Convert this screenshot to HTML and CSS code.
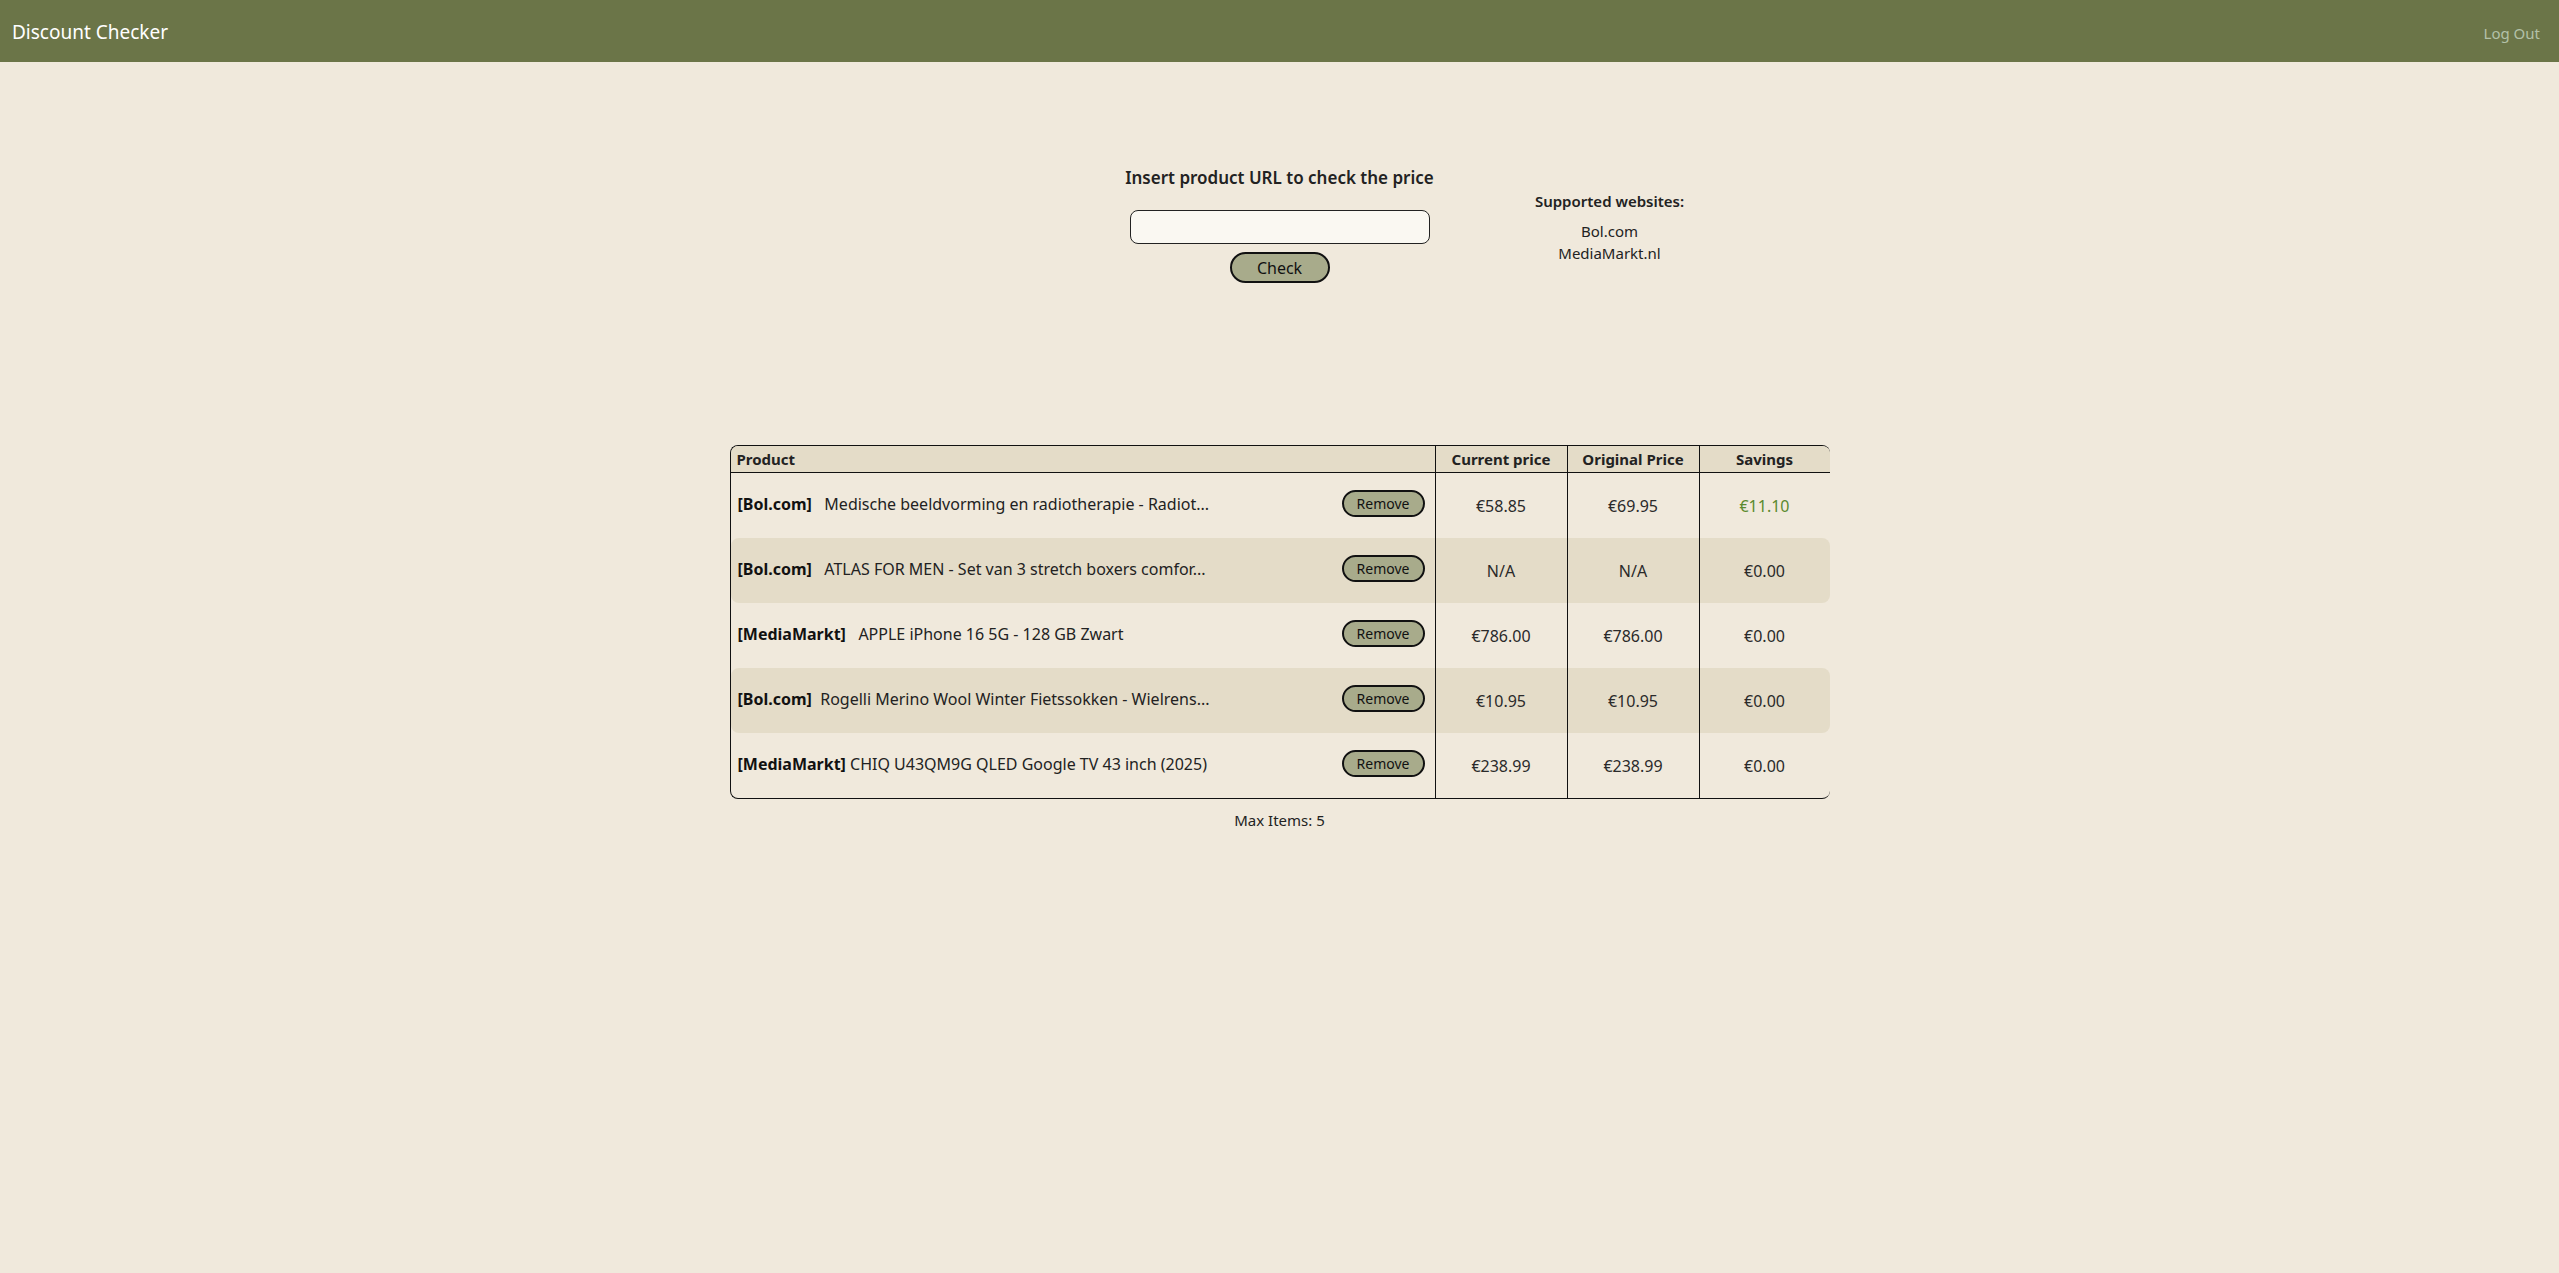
FILE: index.html
```html
<!DOCTYPE html>
<html lang="en">
<head>
<meta charset="utf-8">
<title>Discount Checker</title>
<link rel="stylesheet" href="styles.css">
</head>
<body>
<header class="topbar">
  <span class="brand">Discount Checker</span>
  <a class="logout" href="#">Log Out</a>
</header>
<main class="page">
  <section class="top">
    <form class="check-form" onsubmit="return false">
      <h2 class="form-title">Insert product URL to check the price</h2>
      <input class="url-input" type="text" aria-label="Product URL">
      <button class="btn check-btn" type="submit">Check</button>
    </form>
    <div class="sites">
      <h3 class="sites-title">Supported websites:</h3>
      <ul class="sites-list">
        <li>Bol.com</li>
        <li>MediaMarkt.nl</li>
      </ul>
    </div>
  </section>
  <section class="table-wrap">
    <div class="ptable">
      <div class="prow phead">
        <div class="cell c-product">Product</div>
        <div class="cell c-num">Current price</div>
        <div class="cell c-num">Original Price</div>
        <div class="cell c-num">Savings</div>
      </div>
      <div class="prow">
        <div class="cell c-product"><span class="shop">[Bol.com]</span><span class="pname">&nbsp;&nbsp; Medische beeldvorming en radiotherapie - Radiot...</span><button class="btn remove-btn">Remove</button></div>
        <div class="cell c-num">€58.85</div>
        <div class="cell c-num">€69.95</div>
        <div class="cell c-num saving">€11.10</div>
      </div>
      <div class="prow alt">
        <div class="cell c-product"><span class="shop">[Bol.com]</span><span class="pname">&nbsp;&nbsp; ATLAS FOR MEN - Set van 3 stretch boxers comfor...</span><button class="btn remove-btn">Remove</button></div>
        <div class="cell c-num">N/A</div>
        <div class="cell c-num">N/A</div>
        <div class="cell c-num">€0.00</div>
      </div>
      <div class="prow">
        <div class="cell c-product"><span class="shop">[MediaMarkt]</span><span class="pname">&nbsp;&nbsp; APPLE iPhone 16 5G - 128 GB Zwart</span><button class="btn remove-btn">Remove</button></div>
        <div class="cell c-num">€786.00</div>
        <div class="cell c-num">€786.00</div>
        <div class="cell c-num">€0.00</div>
      </div>
      <div class="prow alt">
        <div class="cell c-product"><span class="shop">[Bol.com]</span><span class="pname">&nbsp; Rogelli Merino Wool Winter Fietssokken - Wielrens...</span><button class="btn remove-btn">Remove</button></div>
        <div class="cell c-num">€10.95</div>
        <div class="cell c-num">€10.95</div>
        <div class="cell c-num">€0.00</div>
      </div>
      <div class="prow">
        <div class="cell c-product"><span class="shop">[MediaMarkt]</span><span class="pname">&nbsp;CHIQ U43QM9G QLED Google TV 43 inch (2025)</span><button class="btn remove-btn">Remove</button></div>
        <div class="cell c-num">€238.99</div>
        <div class="cell c-num">€238.99</div>
        <div class="cell c-num">€0.00</div>
      </div>
    </div>
  </section>
  <p class="max-items">Max Items: 5</p>
</main>
</body>
</html>
```
FILE: styles.css
```css
* { box-sizing: border-box; }

html, body {
  margin: 0;
  padding: 0;
  background: #f0e9dc;
  color: #222;
  font-family: "Noto Sans", "Open Sans", sans-serif;
}

.topbar {
  height: 62px;
  background: #6b7548;
  display: flex;
  align-items: baseline;
  justify-content: space-between;
  padding: 20px 19px 0 12px;
}

.brand {
  font-size: 19px;
  line-height: 24px;
  color: #ffffff;
}

.logout {
  font-size: 15px;
  color: #b3c1a9;
  text-decoration: none;
}

.page {
  min-height: 1211px;
}

.top {
  display: grid;
  grid-template-columns: 1fr 320px 1fr;
  align-items: start;
  padding-top: 105px;
}

.check-form {
  grid-column: 2;
  display: flex;
  flex-direction: column;
  align-items: center;
  margin: 0;
}

.form-title {
  margin: 0 0 21px;
  font-size: 17px;
  line-height: 22px;
  font-weight: 600;
  color: #222;
  white-space: nowrap;
}

.url-input {
  width: 300px;
  height: 34px;
  border: 1px solid #222;
  border-radius: 8px;
  background: #faf8f2;
  font: inherit;
}

.btn {
  font-family: inherit;
  background: #a8ab8b;
  border: 2px solid #111;
  color: #111;
  cursor: pointer;
  padding: 0;
}

.check-btn {
  margin-top: 8px;
  width: 100px;
  height: 31px;
  border-radius: 16px;
  font-size: 16px;
}

.sites {
  grid-column: 3;
  width: 160px;
  margin-left: 90px;
  padding-top: 24px;
  text-align: center;
}

.sites-title {
  margin: 0;
  font-size: 15px;
  line-height: 20px;
  font-weight: 600;
}

.sites-list {
  list-style: none;
  margin: 9px 0 0;
  padding: 0;
  font-size: 15px;
  line-height: 22px;
}

.table-wrap {
  display: flex;
  justify-content: center;
  margin-top: 162px;
}

.ptable {
  width: 1100px;
  border: 1px solid #111;
  border-right: none;
  border-radius: 8px;
  overflow: hidden;
}

.prow {
  display: grid;
  grid-template-columns: 704px 132px 132px 131px;
  height: 65px;
  border-radius: 8px;
}

.prow.alt {
  background: #e4dcc8;
}

.prow.phead {
  height: 27px;
  border-radius: 0;
  background: #e4dcc8;
  border-bottom: 1px solid #111;
  font-weight: 700;
}

.cell {
  display: flex;
  align-items: center;
}

.c-num {
  justify-content: center;
  border-left: 1px solid #111;
  font-size: 16px;
  color: #2a2a2a;
}

.phead .cell {
  font-size: 15px;
  color: #222;
  padding-bottom: 0;
}

.phead .c-product {
  padding-left: 6px;
}

.c-product {
  padding: 0 10px 4px 7px;
  font-size: 16px;
  white-space: nowrap;
}

.shop {
  font-weight: 700;
  color: #111;
}

.pname {
  color: #222;
}

.remove-btn {
  margin-left: auto;
  width: 83px;
  height: 27px;
  border-radius: 14px;
  font-size: 14px;
}

.saving {
  color: #5b8a2e;
}

.max-items {
  margin: 11px 0 0;
  text-align: center;
  font-size: 15px;
  line-height: 20px;
}
```
